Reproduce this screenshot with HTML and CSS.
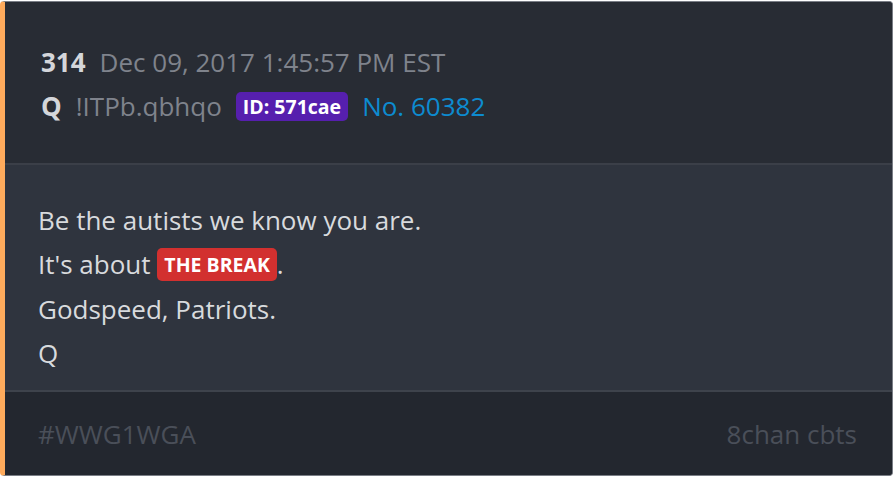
FILE: index.html
```html
<!DOCTYPE html>
<html lang="en">
  <head>
    <meta charset="UTF-8" />
    <meta name="viewport" content="width=device-width, initial-scale=1.0" />
    <title>Post 314</title>
    <link rel="stylesheet" href="styles.css">
  </head>

  <body>
    <div class="card">
      <div class="head">
        <div class="row">
          <span class="num">314</span>
          <span class="date">Dec 09, 2017 1:45:57 PM EST</span>
        </div>
        <div class="row">
          <span class="num">Q</span>
          <span class="trip">!ITPb.qbhqo</span>
          <span class="id">ID: 571cae</span>
          <span class="postno">No. 60382</span>
        </div>
      </div>

      <div class="body">
        <p>Be the autists we know you are.</p>
        <p>It's about <span class="tag">THE BREAK</span>.</p>
        <p>Godspeed, Patriots.</p>
        <p>Q</p>
      </div>

      <div class="foot">
        <span>#WWG1WGA</span>
        <span>8chan cbts</span>
      </div>
    </div>
  </body>
</html>
```

FILE: styles.css
```css
* {
  font-family: "Open Sans", "Noto Sans", sans-serif;
  box-sizing: border-box;
}

body {
  margin: 0;
  background-color: #ffffff;
  padding: 1px 1px 2px 0;
}

.card {
  border: 1px solid #7a7e86;
  border-left: 5px solid #ffab5c;
  border-radius: 4px;
  overflow: hidden;
  background-color: #282c34;
  height: 475px;
  display: flex;
  flex-direction: column;
}

.head {
  background-color: #282c34;
  padding: 38px 36px 0 36px;
  height: 163px;
  border-bottom: 2px solid #3b3f48;
}

.row {
  display: flex;
  align-items: center;
  gap: 14px;
  font-size: 26px;
  height: 44px;
}

.num {
  font-weight: bold;
  color: #d4d6da;
}

.date,
.trip {
  color: #7f838c;
}

.id {
  background-color: #561fae;
  color: #ffffff;
  font-weight: bold;
  font-size: 19.5px;
  line-height: 29px;
  padding: 0 7px;
  border-radius: 5px;
}

.postno {
  color: #0d8bd0;
}

.body {
  background-color: #2f343e;
  padding: 33px 33px 0 33px;
  height: 227px;
  border-bottom: 2px solid #3e434c;
}

.body p {
  margin: 0;
  font-size: 26px;
  line-height: 44px;
  color: #d8dadd;
}

.tag {
  background-color: #d2302f;
  color: #ffffff;
  font-weight: bold;
  font-size: 19.5px;
  padding: 3px 7px;
  border-radius: 5px;
  vertical-align: 2px;
}

.foot {
  flex: 1;
  background-color: #23272f;
  display: flex;
  justify-content: space-between;
  align-items: center;
  padding: 0 35px 0 33px;
  font-size: 26px;
  color: #4a4f59;
}
```
